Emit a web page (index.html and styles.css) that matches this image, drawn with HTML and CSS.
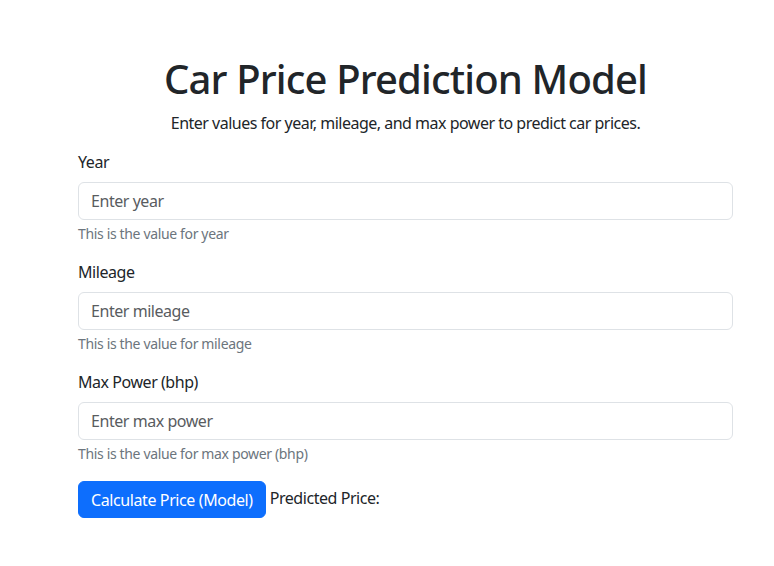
FILE: index.html
```html
<!DOCTYPE html>
<html lang="en">
<head>
<meta charset="utf-8">
<title>Car Price Prediction Model</title>
<link rel="stylesheet" href="styles.css">
</head>
<body>
<main class="page">
  <h1 class="title">Car Price Prediction Model</h1>
  <p class="lead">Enter values for year, mileage, and max power to predict car prices.</p>
  <form class="form">
    <div class="group">
      <label class="label" for="year">Year</label>
      <input class="input" id="year" type="text" placeholder="Enter year">
      <div class="help">This is the value for year</div>
    </div>
    <div class="group">
      <label class="label" for="mileage">Mileage</label>
      <input class="input" id="mileage" type="text" placeholder="Enter mileage">
      <div class="help">This is the value for mileage</div>
    </div>
    <div class="group">
      <label class="label" for="power">Max Power (bhp)</label>
      <input class="input" id="power" type="text" placeholder="Enter max power">
      <div class="help">This is the value for max power (bhp)</div>
    </div>
    <div class="actions">
      <button class="btn" type="button">Calculate Price (Model)</button>
      <span class="result">Predicted Price:</span>
    </div>
  </form>
</main>
</body>
</html>
```
FILE: styles.css
```css
* { box-sizing: border-box; }
html, body { margin: 0; padding: 0; background: #fff; }
body {
  font-family: "Noto Sans", "Open Sans", sans-serif;
  font-size: 16px;
  line-height: 1.5;
  color: #212529;
  letter-spacing: -0.45px;
}
.page {
  width: 655px;
  margin: 0 0 0 78px;
  padding-top: 55px;
}
.title {
  margin: 0 0 8px;
  font-size: 40px;
  line-height: 48px;
  font-weight: 500;
  letter-spacing: -0.85px;
  text-align: center;
}
.lead {
  margin: 0 0 15px;
  letter-spacing: -0.5px;
  text-align: center;
}
.form { margin: 0; }
.group { margin-bottom: 16px; }
.label {
  display: block;
  margin-bottom: 8px;
}
.input {
  display: block;
  width: 100%;
  height: 38px;
  padding: 6px 12px;
  font: inherit;
  letter-spacing: -0.45px;
  color: #212529;
  background: #fff;
  border: 1px solid #dee2e6;
  border-radius: 6px;
  outline: none;
}
.input::placeholder { color: #595c5f; opacity: 1; }
.help {
  margin-top: 3px;
  font-size: 14px;
  line-height: 21px;
  letter-spacing: -0.35px;
  color: #6c757d;
}
.actions {
  display: flex;
  align-items: flex-start;
  gap: 4px;
  margin-top: 17px;
}
.btn {
  height: 37px;
  padding: 5px 12px;
  font: inherit;
  letter-spacing: -0.4px;
  color: #fff;
  background: #0d6efd;
  border: 1px solid #0d6efd;
  border-radius: 6px;
}
.result {
  line-height: 34px;
}
```
